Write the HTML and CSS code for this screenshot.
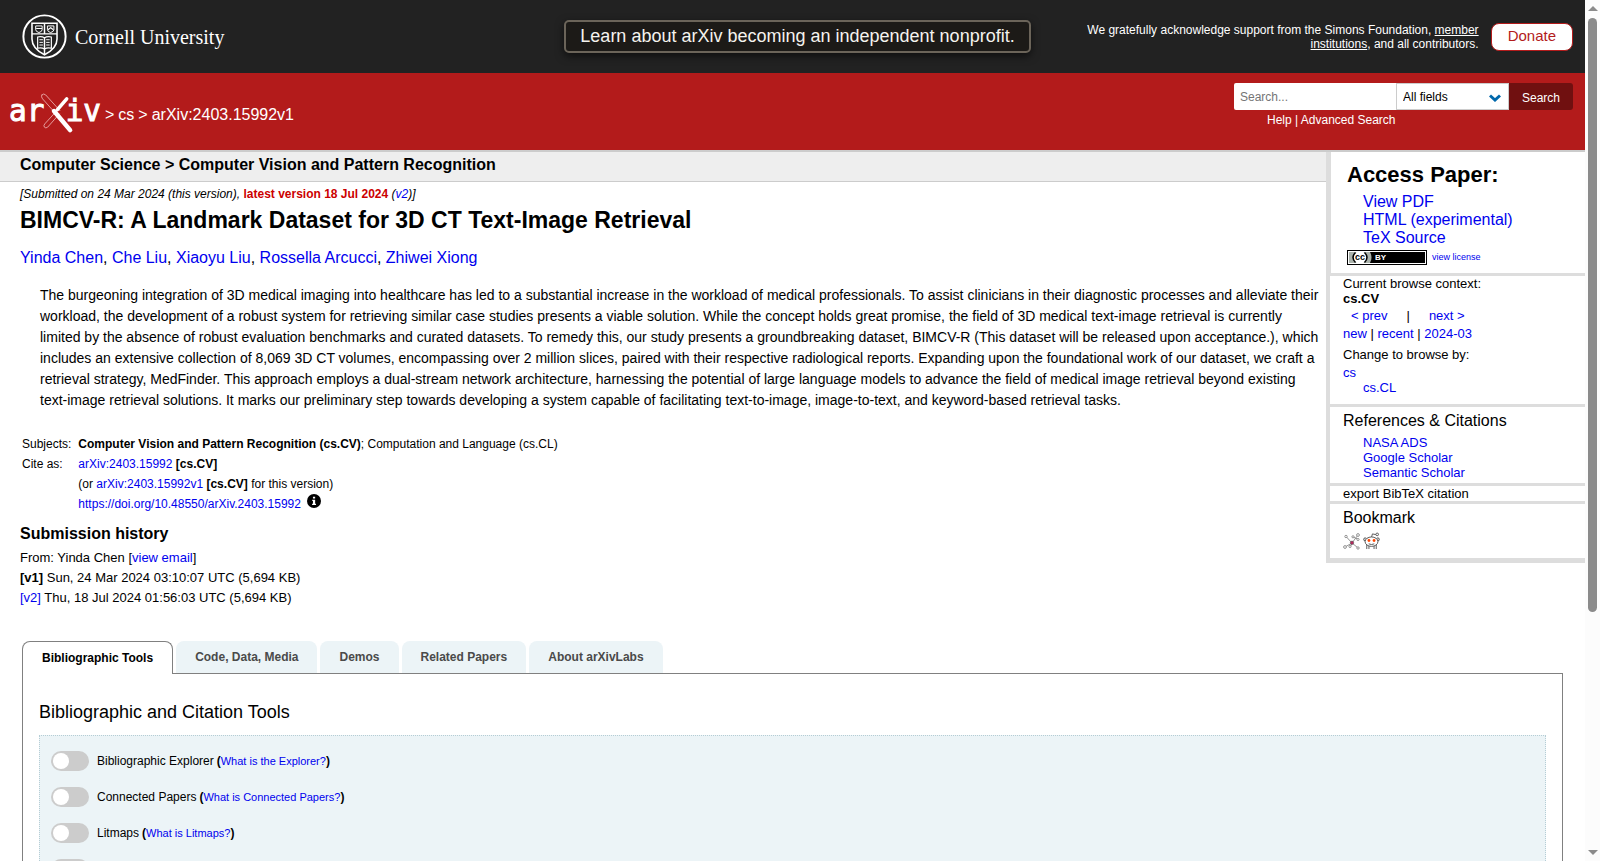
FILE: index.html
```html
<!DOCTYPE html>
<html lang="en">
<head>
    <meta charset="UTF-8">
    <title>[2403.15992v1] BIMCV-R: A Landmark Dataset for 3D CT Text-Image Retrieval</title>
    <link rel="stylesheet" href="styles.css">
</head>
<body>
    <div class="page">
        <!-- university bar -->
        <header class="top-bar">
            <a class="cornell" href="#">
                <svg class="seal" viewBox="0 0 46 46" fill="none" stroke="#fff">
                    <circle cx="23" cy="23" r="21.6" stroke-width="2"/>
                    <path d="M10.2 9.5h25.6v16c0 7-4.800 12-12.800 16.200c-8-4.200-12.800-9.200-12.800-16.200z" stroke-width="1.600"/>
                    <path d="M10.2 20.300h25.600M23 10v11M23 24v17" stroke-width="1.500"/>
                    <path d="M14 12.200v3.800q0 2 3.300 3q3.300-1 3.300-3v-3.800zM26 12.200v3.800q0 2 3.300 3q3.300-1 3.300-3v-3.800z"/>
                    <path d="M14.500 14.800h6M26.500 16l2.800-2 2.800 2" stroke-width="1.200"/>
                    <path d="M16 23.500q4-1 7 .8q3-1.800 7-.8v11.500q-4-1-7 .8q-3-1.800-7-.8z" stroke-width="1.200"/>
                    <path d="M17.800 26.300h3.600M17.800 29h3.600M17.800 31.700h3.600M24.700 26.300h3.600M24.700 29h3.600M24.700 31.700h3.600"/>
                </svg>
                <span>Cornell University</span>
            </a>
            <a class="notice" href="#">Learn about arXiv becoming an independent nonprofit.</a>
            <div class="sponsors">
                <p>We gratefully acknowledge support from the Simons Foundation, <a href="#">member institutions</a>, and all contributors.</p>
                <a class="donate" href="#">Donate</a>
            </div>
        </header>

        <!-- logo, breadcrumbs and search -->
        <div class="red-bar">
            <div class="crumbs">
                <a class="logo" href="#" aria-label="arXiv">
                    <svg viewBox="-4 0 96 43" fill="none" stroke-linecap="round">
                        <text class="logo-text" x="-2" y="30">ar</text>
                        <text class="logo-text" x="56" y="30">iv</text>
                        <path d="M31.500 3q2-2 4 0l14.500 16M31.500 3q-1 2 .8 4l12.500 14M49.500 22.500l-12 13.500q-2 1.500-3.300 0q-1.200-1.600.3-3.300l10.500-11.500" stroke="#e5a0a0"/>
                        <path d="M57 7l-9.500 11" stroke="#fff" stroke-width="3.600"/>
                        <path d="M44 19.500l16.500 19.500" stroke="#fff" stroke-width="4.600"/>
                    </svg>
                </a>
                <span>&gt;</span>
                <a href="#">cs</a>
                <span>&gt;</span>
                <span>arXiv:2403.15992v1</span>
            </div>
            <form class="search" onsubmit="return false">
                <div class="search-row">
                    <input class="search-input" type="text" placeholder="Search..." aria-label="Search term or terms">
                    <div class="select-box">
                        <select aria-label="Field to search">
                            <option>All fields</option>
                            <option>Title</option>
                            <option>Author</option>
                            <option>Abstract</option>
                        </select>
                        <svg viewBox="0 0 12 8" fill="none" stroke="#0068ac" stroke-width="3"><path d="M1 1.500l5 4.500 5-4.500"/></svg>
                    </div>
                    <button class="search-btn">Search</button>
                </div>
                <p class="search-help"><a href="#">Help</a> | <a href="#">Advanced Search</a></p>
            </form>
        </div>

        <div class="content">
            <main>
                <h2 class="subject">Computer Science &gt; Computer Vision and Pattern Recognition</h2>
                <div class="paper">
                    <p class="dateline">[Submitted on 24 Mar 2024 (this version), <strong>latest version 18 Jul 2024</strong> (<a href="#">v2</a>)]</p>
                    <h1>BIMCV-R: A Landmark Dataset for 3D CT Text-Image Retrieval</h1>
                    <p class="authors"><a href="#">Yinda Chen</a>, <a href="#">Che Liu</a>, <a href="#">Xiaoyu Liu</a>, <a href="#">Rossella Arcucci</a>, <a href="#">Zhiwei Xiong</a></p>
                    <p class="abstract">The burgeoning integration of 3D medical imaging into healthcare has led to a substantial increase in the workload of medical professionals. To assist clinicians in their diagnostic processes and alleviate their workload, the development of a robust system for retrieving similar case studies presents a viable solution. While the concept holds great promise, the field of 3D medical text-image retrieval is currently limited by the absence of robust evaluation benchmarks and curated datasets. To remedy this, our study presents a groundbreaking dataset, BIMCV-R (This dataset will be released upon acceptance.), which includes an extensive collection of 8,069 3D CT volumes, encompassing over 2 million slices, paired with their respective radiological reports. Expanding upon the foundational work of our dataset, we craft a retrieval strategy, MedFinder. This approach employs a dual-stream network architecture, harnessing the potential of large language models to advance the field of medical image retrieval beyond existing text-image retrieval solutions. It marks our preliminary step towards developing a system capable of facilitating text-to-image, image-to-text, and keyword-based retrieval tasks.</p>

                    <table class="meta">
                        <tr>
                            <td>Subjects:</td>
                            <td><b>Computer Vision and Pattern Recognition (cs.CV)</b>; Computation and Language (cs.CL)</td>
                        </tr>
                        <tr>
                            <td>Cite as:</td>
                            <td><a href="#">arXiv:2403.15992</a> <b>[cs.CV]</b></td>
                        </tr>
                        <tr>
                            <td></td>
                            <td>(or <a href="#">arXiv:2403.15992v1</a> <b>[cs.CV]</b> for this version)</td>
                        </tr>
                        <tr>
                            <td></td>
                            <td>
                                <a href="#">https://doi.org/10.48550/arXiv.2403.15992</a>
                                <svg class="info" viewBox="0 0 16 16"><circle cx="8" cy="8" r="8"/><path fill="#fff" d="M6.800 3h2.500v2.200h-2.500zM6 6.500h3.300v4.500h1v1.500h-4.500v-1.500h1v-3h-.8z"/></svg>
                            </td>
                        </tr>
                    </table>

                    <div class="history">
                        <h2>Submission history</h2>
                        <p>From: Yinda Chen [<a href="#">view email</a>]</p>
                        <p><b>[v1]</b> Sun, 24 Mar 2024 03:10:07 UTC (5,694 KB)</p>
                        <p><a href="#">[v2]</a> Thu, 18 Jul 2024 01:56:03 UTC (5,694 KB)</p>
                    </div>
                </div>
            </main>

            <aside class="side">
                <section class="access">
                    <h2>Access Paper:</h2>
                    <ul>
                        <li><a href="#">View PDF</a></li>
                        <li><a href="#">HTML (experimental)</a></li>
                        <li><a href="#">TeX Source</a></li>
                    </ul>
                    <div class="license">
                        <svg viewBox="0 0 80 15">
                            <path d="M0 0h80v15h-80z"/>
                            <path d="M1 1h78v13h-78z" fill="#fff"/>
                            <path d="M2 2h76v11h-76z"/>
                            <path d="M2 2h21q3 5.500 0 11h-21z" fill="#aab2ab"/>
                            <circle cx="13" cy="7.500" r="6.500" fill="#fff"/>
                            <path d="M8.500 2.500q-5 5 0 10M17.500 2.500q5 5 0 10" fill="none" stroke="#000" stroke-width="1.500"/>
                            <text class="badge-cc" x="8" y="10">cc</text>
                            <text class="badge-by" x="28" y="10">BY</text>
                        </svg>
                        <a href="#">view license</a>
                    </div>
                </section>
                <section class="browse">
                    <h3>Current browse context:</h3>
                    <p class="current">cs.CV</p>
                    <p class="prevnext"><a href="#">&lt; prev</a><span>|</span><a href="#">next &gt;</a></p>
                    <p class="list"><a href="#">new</a> | <a href="#">recent</a> | <a href="#">2024-03</a></p>
                    <p class="change">Change to browse by:</p>
                    <p><a href="#">cs</a></p>
                    <p class="indent"><a href="#">cs.CL</a></p>
                </section>
                <section class="refs">
                    <h3>References &amp; Citations</h3>
                    <ul>
                        <li><a href="#">NASA ADS</a></li>
                        <li><a href="#">Google Scholar</a></li>
                        <li><a href="#">Semantic Scholar</a></li>
                    </ul>
                </section>
                <section class="export">
                    <button>export BibTeX citation</button>
                </section>
                <section class="bookmark">
                    <h3>Bookmark</h3>
                    <a href="#" aria-label="BibSonomy">
                        <svg viewBox="0 0 17 18" fill="none" stroke="#888" stroke-width=".9">
                            <path d="M3.500 5l5.500 6 5.500 4.500M9 11l6-8M9 11l-7 4M9 4.500l5.500 2.500M9 11l-1.500 3.500"/>
                            <g fill="#fff"><circle cx="3" cy="4.500" r="1.200"/><circle cx="15" cy="3" r="1.400"/><circle cx="15" cy="7.500" r="1.100"/><circle cx="10" cy="4.800" r="1.100"/><circle cx="2" cy="15" r="1.400"/><circle cx="7" cy="14.500" r="1.100"/><circle cx="15" cy="16" r="1.200"/></g>
                            <circle cx="9" cy="10.800" r="1.700" fill="#b8245c" stroke="#555" stroke-width=".6"/>
                        </svg>
                    </a>
                    <a href="#" aria-label="Reddit">
                        <svg viewBox="0 0 18 18" fill="none" stroke="#555">
                            <path d="M4 12.500v5M6.300 14v3.500M14 12.500v5M11.700 14v3.500M9 5l1-3.500 4 .8"/>
                            <circle cx="15" cy="2" r="1.400" fill="#fff"/>
                            <circle cx="2.300" cy="7.300" r="1.600" fill="#ddd"/><circle cx="15.700" cy="7.300" r="1.600" fill="#ddd"/>
                            <ellipse cx="9" cy="9.700" rx="6.800" ry="5" fill="#fff"/>
                            <g fill="#ff4500" stroke="none"><circle cx="6.300" cy="8.500" r="1.500"/><circle cx="11.700" cy="8.500" r="1.500"/></g>
                            <path d="M6 12q3 1.500 6 0"/>
                        </svg>
                    </a>
                </section>
            </aside>
        </div>

        <!-- labs tabs -->
        <div class="labs">
            <div class="tabs" role="tablist">
                <button class="tab active" role="tab">Bibliographic Tools</button>
                <button class="tab" role="tab">Code, Data, Media</button>
                <button class="tab" role="tab">Demos</button>
                <button class="tab" role="tab">Related Papers</button>
                <button class="tab" role="tab">About arXivLabs</button>
            </div>
            <div class="panel">
                <h2>Bibliographic and Citation Tools</h2>
                <div class="toggles">
                    <div class="toggle-row">
                        <input type="checkbox" id="explorer">
                        <label for="explorer">Bibliographic Explorer</label>
                        <span class="what">(<a href="#">What is the Explorer?</a>)</span>
                    </div>
                    <div class="toggle-row">
                        <input type="checkbox" id="connected">
                        <label for="connected">Connected Papers</label>
                        <span class="what">(<a href="#">What is Connected Papers?</a>)</span>
                    </div>
                    <div class="toggle-row">
                        <input type="checkbox" id="litmaps">
                        <label for="litmaps">Litmaps</label>
                        <span class="what">(<a href="#">What is Litmaps?</a>)</span>
                    </div>
                    <div class="toggle-row">
                        <input type="checkbox" aria-label="scite Smart Citations">
                    </div>
                </div>
            </div>
        </div>
    </div>

    <div class="scrollbar" aria-hidden="true">
        <i class="arrow-up"></i>
        <i class="thumb"></i>
        <i class="arrow-down"></i>
    </div>
</body>
</html>
```
FILE: styles.css
```css
* {
    box-sizing: border-box;
    margin: 0;
    padding: 0;
}
body {
    display: flex;
    height: 100vh;
    overflow: hidden;
    background: #fff;
    color: #000;
    font-family: "Liberation Sans", Arial, Helvetica, sans-serif;
    font-size: 13px;
    line-height: 15px;
}
ul {
    list-style: none;
}
a {
    color: #0000ee;
    text-decoration: none;
}
button, input, select {
    font-family: inherit;
    border: 0;
}
svg {
    display: block;
}
.page {
    flex: 1;
    min-width: 0;
    overflow: hidden;
}

/* top bar */
.top-bar {
    display: grid;
    grid-template-columns: 1fr auto 1fr;
    align-items: center;
    height: 73px;
    padding: 0 12px 0 22px;
    background: #222;
    color: #fff;
}
.cornell {
    display: flex;
    align-items: center;
    gap: 8px;
    color: #fff;
    font-family: "Liberation Serif", "Times New Roman", serif;
    font-size: 20px;
    line-height: 24px;
}
.seal {
    width: 45px;
    height: 45px;
}
.notice {
    padding: 4px 14px 5px;
    border: 2px solid #6b6459;
    border-radius: 5px;
    background: #1c1a17;
    box-shadow: 0 3px 8px rgba(0, 0, 0, .6);
    color: #f5f3ee;
    font-size: 18px;
    line-height: 20px;
}
.sponsors {
    display: flex;
    align-items: center;
    justify-content: flex-end;
    gap: 12px;
    padding-left: 48px;
    font-size: 12px;
    line-height: 14px;
    text-align: right;
}
.sponsors p a {
    color: #fff;
    text-decoration: underline;
}
.sponsors .donate {
    padding: 2px 16px 5px;
    border: 1px solid #b31b1b;
    border-radius: 8px;
    background: #fff;
    color: #b31b1b;
    font-size: 15px;
    line-height: 19px;
}

/* red bar */
.red-bar {
    display: flex;
    justify-content: space-between;
    height: 79px;
    padding: 10px 12px 0 7px;
    border-bottom: 2px solid #ccc;
    background: #b31b1b;
    color: #fff;
}
.red-bar a {
    color: #fff;
}
.crumbs {
    display: flex;
    gap: 4px;
    padding-top: 23px;
    font-size: 16px;
    line-height: 18px;
}
.logo {
    margin-top: -14px;
}
.logo svg {
    width: 94px;
    height: 42px;
}
.logo-text {
    fill: #fff;
    stroke: #fff;
    stroke-width: 1px;
    font-family: "DejaVu Sans Mono", monospace;
    font-size: 30px;
}
.search-row {
    display: flex;
    height: 27px;
}
.search-input {
    width: 162px;
    padding: 0 6px;
    border-radius: 2px 0 0 2px;
    background: #fff;
    font-size: 12px;
}
.select-box {
    position: relative;
}
.select-box select {
    appearance: none;
    width: 113px;
    height: 27px;
    padding: 0 6px;
    border: 1px solid #ccc;
    border-radius: 0;
    background: #fff;
    color: #000;
    font-size: 12px;
}
.select-box svg {
    position: absolute;
    top: 11px;
    right: 8px;
    width: 12px;
    height: 8px;
    pointer-events: none;
}
.search-btn {
    width: 64px;
    padding-top: 2px;
    border-radius: 0 3px 3px 0;
    background: #701010;
    color: #fff;
    font-size: 12px;
}
.search-help {
    padding: 3px 0 0 33px;
    font-size: 12px;
}

/* content */
.content {
    display: grid;
    grid-template-columns: 1fr 259px;
    align-items: start;
}
.subject {
    padding: 4px 20px 7px;
    border-bottom: 1px solid #ccc;
    background: #eee;
    font-size: 16px;
    line-height: 18px;
}
.paper {
    padding-left: 20px;
}
.dateline {
    padding-top: 5px;
    font-size: 12px;
    line-height: 14px;
    font-style: italic;
}
.dateline strong {
    color: #c00;
    font-style: normal;
}
.paper h1 {
    padding: 5px 0 10px;
    font-size: 23px;
    line-height: 28px;
}
.authors {
    padding: 4px 0 17px;
    font-size: 16px;
    line-height: 20px;
}
.abstract {
    padding: 0 4px 0 20px;
    font-size: 14px;
    line-height: 21px;
}
.meta {
    margin-top: 23px;
    border-spacing: 0;
    font-size: 12px;
    line-height: 20px;
}
.meta td {
    padding: 0 5px 0 2px;
}
.info {
    display: inline-block;
    width: 14px;
    height: 14px;
    margin-left: 3px;
}
.history {
    padding-top: 10px;
    line-height: 20px;
}
.history h2 {
    padding-bottom: 4px;
    font-size: 16px;
}

/* side column */
.side {
    border-left: 4px solid #ddd;
    border-bottom: 2px solid #ddd;
}
.side section {
    padding-left: 13px;
    border-bottom: 3px solid #ddd;
}
.side h3 {
    font-size: 16px;
    font-weight: normal;
    line-height: 18px;
}
.side .access {
    padding: 10px 0 8px 16px;
    border-left: 1px solid #ddd;
}
.access h2 {
    padding-bottom: 6px;
    font-size: 22px;
    line-height: 25px;
}
.access ul {
    padding: 0 0 3px 16px;
    font-size: 16px;
    line-height: 18px;
}
.license {
    display: flex;
    align-items: center;
    gap: 5px;
    font-size: 9px;
}
.license svg {
    width: 80px;
    height: 15px;
}
.badge-cc {
    font-size: 9px;
    font-weight: bold;
}
.badge-by {
    fill: #fff;
    font-size: 8px;
    font-weight: bold;
}
.side .browse {
    padding-bottom: 9px;
}
.side .browse h3 {
    font-size: 13px;
    line-height: 15px;
}
.current {
    font-weight: bold;
}
.prevnext {
    display: flex;
    gap: 19px;
    padding: 2px 8px 3px;
}
.list {
    padding-bottom: 4px;
}
.change {
    padding: 2px 0 3px;
}
.indent {
    padding-left: 20px;
}
.refs h3 {
    padding: 5px 0;
}
.refs ul {
    padding: 0 0 3px 20px;
}
.export button {
    display: block;
    background: none;
    font-size: 13px;
    line-height: 15px;
}
.side .bookmark {
    display: flex;
    flex-wrap: wrap;
    gap: 5px 3px;
    padding-top: 5px;
    padding-bottom: 8px;
}
.bookmark h3 {
    width: 100%;
}
.bookmark svg {
    width: 17px;
    height: 18px;
}

/* labs */
.labs {
    padding: 33px 22px 0;
}
.tabs {
    display: flex;
    gap: 3px;
}
.tab {
    height: 32px;
    padding: 0 19px;
    border-radius: 8px 8px 0 0;
    background: #ecf4f7;
    color: #4a4a4a;
    font-size: 12px;
    font-weight: bold;
}
.tab.active {
    z-index: 1;
    height: 33px;
    margin-bottom: -1px;
    border: 1px solid #808080;
    border-bottom: 0;
    background: #fff;
    color: #000;
}
.panel {
    padding: 28px 16px;
    border: 1px solid #808080;
}
.panel h2 {
    padding-bottom: 13px;
    font-size: 18px;
    font-weight: normal;
    line-height: 20px;
}
.toggles {
    display: grid;
    gap: 16px;
    padding: 15px 11px;
    border: 1px dotted #b5cdd5;
    background: #ecf4f7;
}
.toggle-row {
    display: flex;
    align-items: center;
    height: 20px;
    font-size: 12px;
}
.toggle-row input {
    appearance: none;
    width: 38px;
    height: 20px;
    margin-right: 8px;
    padding: 2px;
    border-radius: 10px;
    background: #ccc;
}
.toggle-row input::before {
    content: "";
    display: block;
    width: 16px;
    height: 16px;
    border-radius: 50%;
    background: #fff;
}
.toggle-row input:checked {
    padding-left: 20px;
    background: #1c61a8;
}
.what {
    margin-left: 3px;
    font-weight: bold;
}
.what a {
    font-size: 11px;
    font-weight: normal;
}

/* scroll bar */
.scrollbar {
    display: flex;
    flex-direction: column;
    align-items: center;
    width: 15px;
    padding: 6px 0;
    background: #fcfcfc;
}
.arrow-up, .arrow-down {
    border: 5px solid transparent;
}
.arrow-up {
    border-top: 0;
    border-bottom-color: #8b8b8b;
}
.arrow-down {
    margin-top: auto;
    border-bottom: 0;
    border-top-color: #8b8b8b;
}
.thumb {
    width: 9px;
    height: 69vh;
    margin-top: 7px;
    border-radius: 5px;
    background: #8b8b8b;
}
```
